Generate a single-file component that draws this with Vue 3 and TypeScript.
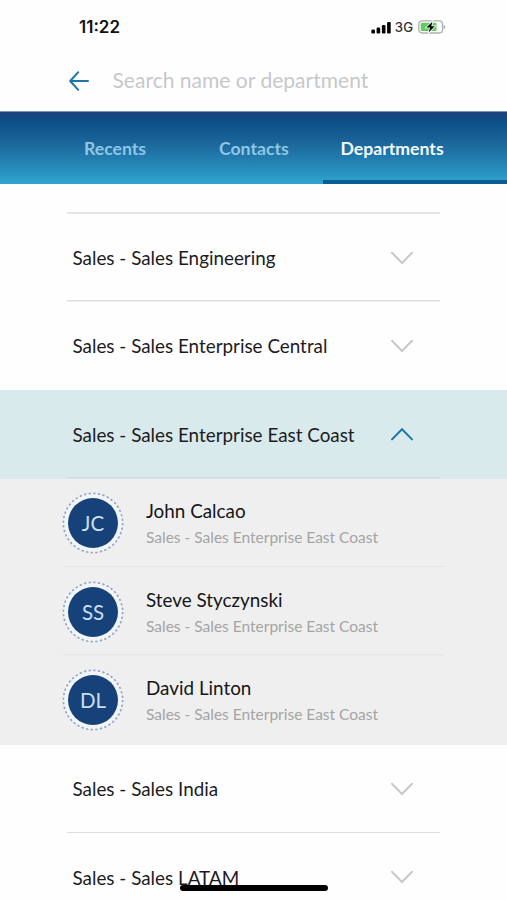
<script setup lang="ts">
import { ref } from 'vue'

interface Person {
  initials: string
  name: string
}

interface Department {
  name: string
  people: Person[]
}

const tabs = ['Recents', 'Contacts', 'Departments']
const activeTab = ref('Departments')
const query = ref('')
const openDepartment = ref('Sales - Sales Enterprise East Coast')

const departments: Department[] = [
  { name: 'Sales - Sales Engineering', people: [] },
  { name: 'Sales - Sales Enterprise Central', people: [] },
  {
    name: 'Sales - Sales Enterprise East Coast',
    people: [
      { initials: 'JC', name: 'John Calcao' },
      { initials: 'SS', name: 'Steve Styczynski' },
      { initials: 'DL', name: 'David Linton' },
    ],
  },
  { name: 'Sales - Sales India', people: [] },
  { name: 'Sales - Sales LATAM', people: [] },
]

function toggle(name: string) {
  openDepartment.value = openDepartment.value === name ? '' : name
}
</script>

<template>
  <main class="screen">
    <header class="status">
      <span class="time">11:22</span>
      <div class="indicators">
        <svg class="signal" width="20" height="13" viewBox="0 0 20 13">
          <rect x="0.4" y="8.6" width="3.6" height="3.8" rx="1.2" />
          <rect x="5.6" y="6.6" width="3.6" height="5.8" rx="1.2" />
          <rect x="10.9" y="4" width="3.6" height="8.4" rx="1.2" />
          <rect x="16.1" y="1" width="3.6" height="11.4" rx="1.2" />
        </svg>
        <span class="network">3G</span>
        <svg class="battery" width="28" height="14" viewBox="0 0 28 14">
          <rect x="0.8" y="0.8" width="23.7" height="12.2" rx="3.2" fill="#fff" stroke="#b0b0b0" stroke-width="1.3" />
          <rect x="2.7" y="2.8" width="15.8" height="8.2" rx="1.3" fill="#62cc60" />
          <path d="M25.6 5v4.2q1.6-.7 1.6-2.1T25.6 5z" fill="#a0a0a0" />
          <path d="M14.4 1.8 8.3 7.6h3.7l-1.2 4.7 6-6.1h-3.5z" fill="#000" stroke="#fff" stroke-width="1.5" paint-order="stroke" />
        </svg>
      </div>
    </header>

    <div class="search">
      <svg class="back" width="22" height="22" viewBox="0 0 22 22">
        <path d="M10.2 2.2 2.2 11l8 8.8M2.4 11h17.6" />
      </svg>
      <input v-model="query" class="field" type="text" placeholder="Search name or department" />
    </div>

    <nav class="tabs">
      <button
        v-for="tab in tabs"
        :key="tab"
        class="tab"
        :class="[tab.toLowerCase(), { active: tab === activeTab }]"
        @click="activeTab = tab"
      >
        <span>{{ tab }}</span>
      </button>
    </nav>

    <section class="list">
      <div class="top-rule"></div>
      <article
        v-for="department in departments"
        :key="department.name"
        class="department"
        :class="{ open: department.name === openDepartment }"
      >
        <button class="row" @click="toggle(department.name)">
          <span class="label">{{ department.name }}</span>
          <svg class="chevron" width="24" height="14" viewBox="0 0 24 14">
            <path v-if="department.name === openDepartment" d="M2 12.4 12 2.2 22 12.4" />
            <path v-else d="M2 1.8 12 12 22 1.8" />
          </svg>
        </button>
        <ul v-if="department.name === openDepartment" class="people">
          <li v-for="person in department.people" :key="person.name" class="person">
            <div class="avatar">
              <svg class="ring" width="62" height="62" viewBox="0 0 62 62">
                <circle cx="31" cy="31" r="29.6" />
              </svg>
              <span class="initials">{{ person.initials }}</span>
            </div>
            <div class="details">
              <span class="name">{{ person.name }}</span>
              <span class="team">{{ department.name }}</span>
            </div>
          </li>
        </ul>
      </article>
    </section>
    <div class="home-bar"></div>
  </main>
</template>

<style>
body {
  margin: 0;
  background: #fefefe;
}
</style>

<style scoped>
.screen {
  position: relative;
  width: 507px;
  height: 900px;
  overflow: hidden;
  background: #fefefe;
  font-family: Lato, 'Liberation Sans', sans-serif;
}
button {
  border: 0;
  margin: 0;
  padding: 0;
  background: none;
  font: inherit;
  color: inherit;
  text-align: left;
}
.status {
  display: flex;
  justify-content: space-between;
  align-items: center;
  box-sizing: border-box;
  height: 53px;
  padding: 0 61px 0 79px;
}
.time {
  font: 600 17px Inter, sans-serif;
  color: #111;
}
.indicators {
  display: flex;
  align-items: center;
}
.network {
  margin: 1px 5px 0 4px;
  font: 500 13.2px Inter, sans-serif;
  color: #333;
}
.signal {
  margin-top: 1px;
}
.search {
  display: flex;
  align-items: center;
  height: 58px;
  padding: 0 68px;
}
.back {
  flex: none;
  margin-top: -3px;
  fill: none;
  stroke: #1d75a8;
  stroke-width: 2;
  stroke-linecap: round;
  stroke-linejoin: round;
}
.field {
  flex: 1;
  min-width: 0;
  margin: -5px 0 0 22.5px;
  padding: 0;
  border: 0;
  outline: 0;
  background: transparent;
  font: 400 21.05px Lato, sans-serif;
  color: #222;
}
.field::placeholder {
  color: #c7c8cb;
  opacity: 1;
}
.tabs {
  display: grid;
  grid-template-columns: 185px 138px 184px;
  box-sizing: border-box;
  height: 72.5px;
  border-top: 1px solid #7d95b5;
  background: linear-gradient(#1c427c 0, #0c5087 13%, #1a6599 42%, #2584b5 72%, #30a5cf 100%);
}
.tab {
  display: flex;
  align-items: center;
  box-sizing: border-box;
  padding-top: 5.5px;
  border-bottom: 4px solid transparent;
  font-size: 17.65px;
  font-weight: 700;
  color: #8fc6e3;
}
.recents {
  padding-left: 84px;
}
.contacts {
  padding-left: 34px;
}
.departments {
  padding-left: 17.5px;
}
.active {
  border-bottom-color: #0b5c91;
  color: #f4fbff;
}
.list {
  padding-top: 28px;
}
.top-rule {
  height: 2px;
  margin: 0 67px;
  background: #e5e5e5;
}
.row {
  display: flex;
  align-items: center;
  justify-content: space-between;
  box-sizing: border-box;
  width: 100%;
  height: 88.6px;
  padding: 0 93.5px 0 72.5px;
  background: linear-gradient(#dfdfdf, #dfdfdf) 67px 100% / 373px 1.5px no-repeat;
}
.department:first-of-type .row {
  height: 88.1px;
}
.department:has(+ .open) .row {
  background: none;
}
.open .row {
  background-color: #d9eaec;
  background-image: linear-gradient(#d3dcde, #d3dcde);
}
.label {
  font-size: 18.85px;
  color: #1c1c1e;
}
.chevron {
  fill: none;
  stroke: #c8c8c8;
  stroke-width: 2;
  stroke-linecap: round;
}
.open .chevron {
  stroke: #1d75a8;
}
.people {
  margin: 0;
  padding: 0;
  list-style: none;
  background: #efefef;
}
.person {
  display: flex;
  align-items: center;
  box-sizing: border-box;
  height: 88.6px;
  padding-left: 62px;
  background: linear-gradient(#e6e6e6, #e6e6e6) 63px 100% / 382px 1.5px no-repeat;
}
.person:last-child {
  background: none;
}
.avatar {
  display: grid;
  place-items: center;
  width: 62px;
  height: 62px;
}
.avatar > * {
  grid-area: 1 / 1;
}
.ring {
  fill: #f2f5f8;
  stroke: #94a6c4;
  stroke-width: 1.7;
  stroke-dasharray: 2.3 2.35;
}
.initials {
  z-index: 1;
  width: 50px;
  border-radius: 50%;
  background: #174279;
  font-size: 20.5px;
  line-height: 50px;
  text-align: center;
  color: #c9dff4;
}
.details {
  display: flex;
  flex-direction: column;
  margin: 2px 0 0 22px;
}
.name {
  font-size: 18.85px;
  line-height: 26px;
  color: #161616;
}
.team {
  font-size: 15.5px;
  line-height: 26px;
  color: #a4a4a4;
}
.home-bar {
  position: absolute;
  left: 180px;
  bottom: 9px;
  width: 148px;
  height: 6px;
  border-radius: 3px;
  background: #000;
}
</style>
